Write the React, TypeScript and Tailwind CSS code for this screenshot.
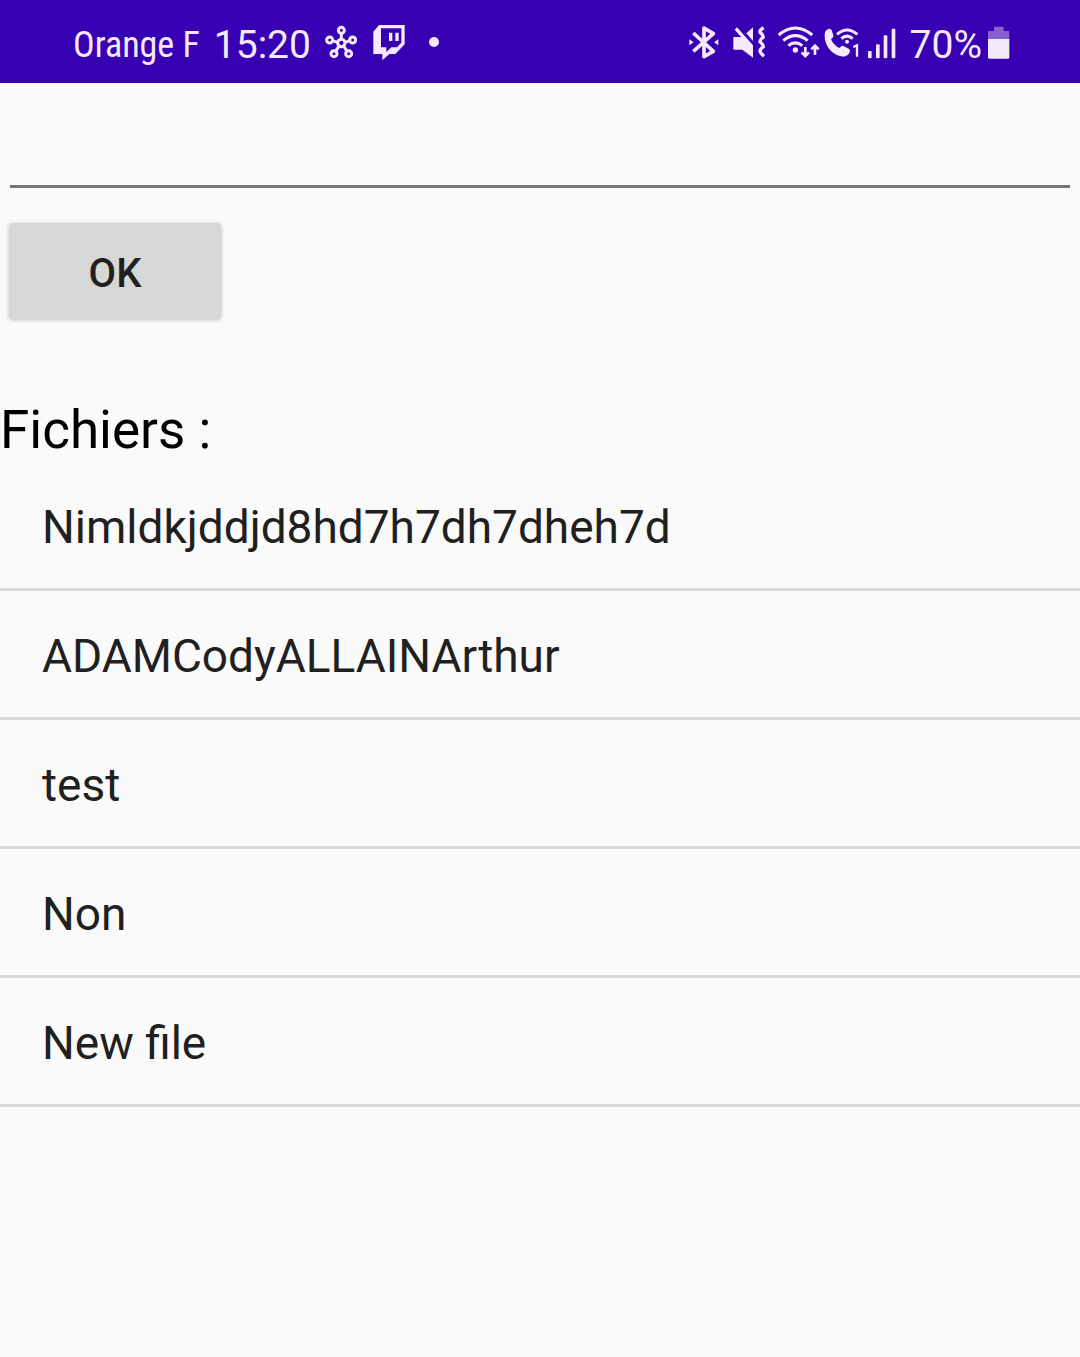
import { useState } from "react";

const initialFiles = ["Nimldkjddjd8hd7h7dh7dheh7d", "ADAMCodyALLAINArthur", "test", "Non", "New file"];

function HubIcon() {
  return (
    <svg className="h-9 w-8 shrink-0" viewBox="30 27 96 108" fill="none" stroke="currentColor" strokeWidth="9" aria-hidden="true">
      <circle cx="79" cy="46" r="9" />
      <circle cx="44" cy="75" r="9" />
      <circle cx="113" cy="75" r="9" />
      <circle cx="57" cy="116" r="9" />
      <circle cx="101" cy="116" r="9" />
      <circle cx="79" cy="84" r="11" />
      <path d="M79 54V74M51 77L69 82M106 77L89 82M62 109L72 93M96 109L86 93" />
    </svg>
  );
}

function TwitchIcon() {
  return (
    <svg className="h-9 w-8 shrink-0" viewBox="172 27 96 108" fill="currentColor" fillRule="evenodd" aria-hidden="true">
      <path d="M173 50L190 30H267V88L239 117H221L200 136V117H173ZM196 40V97H212V111L227 97H244L257 83V40Z" />
      <path d="M220 53H230V78H220ZM239 53H249V78H239Z" />
    </svg>
  );
}

function BluetoothIcon() {
  return (
    <svg className="h-9 w-[30px] shrink-0" viewBox="29 27 90 108" fill="none" stroke="currentColor" strokeWidth="11" aria-hidden="true">
      <path d="M42 54L102 109L74 125V39L102 56L42 109" strokeLinejoin="round" />
      <path d="M30 73L43 82L30 91ZM117 73L104 82L117 91Z" fill="currentColor" stroke="none" />
    </svg>
  );
}

function MuteIcon() {
  return (
    <svg className="h-9 w-[33px] shrink-0" viewBox="161 27 99 108" fill="currentColor" aria-hidden="true">
      <path d="M164 66H185L166 44L173 37L221 91V128L189 104H164Q162 104 162 102V68Q162 66 164 66Z" />
      <path d="M221 37V78L201 55Z" />
      <path d="M253 38Q240 45 242 52Q252 60 252 66Q242 74 242 81Q252 88 252 95Q242 102 242 109Q245 116 254 124" fill="none" stroke="currentColor" strokeWidth="10" />
    </svg>
  );
}

function WifiIcon() {
  return (
    <svg className="h-9 w-[42px] shrink-0" viewBox="294 27 126 108" fill="none" stroke="currentColor" strokeWidth="9" aria-hidden="true">
      <path d="M296 60Q346 18 397 60M310 77Q346 47 383 77M325 92Q346 75 367 92" />
      <circle cx="346" cy="105" r="8" fill="currentColor" stroke="none" />
      <path d="M376 96V122M365 112L376 123L387 112M405 120V93M394 103L405 92L416 103" strokeWidth="8" />
    </svg>
  );
}

function WifiCallIcon() {
  return (
    <svg className="h-9 w-9 shrink-0" viewBox="27 27 108 108" fill="none" stroke="currentColor" strokeWidth="9" aria-hidden="true">
      <path d="M30 51Q34 42 43 41Q48 41 50 46L55 61Q56 66 51 70L48 73Q56 91 73 99L79 94Q82 91 87 94L101 101Q107 105 104 112Q99 123 86 125Q63 124 45 105Q25 82 30 51Z" fill="currentColor" stroke="none" />
      <path d="M66 58Q96 32 127 58M79 71Q96 56 113 71" />
      <circle cx="96" cy="80" r="6" fill="currentColor" stroke="none" />
      <path d="M115 96L126 91V125" strokeWidth="7" />
    </svg>
  );
}

function SignalIcon() {
  return (
    <svg className="h-9 w-7 shrink-0" viewBox="161 27 84 108" fill="currentColor" aria-hidden="true">
      <rect x="161" y="108" width="11" height="22" rx="3" />
      <rect x="185" y="88" width="11" height="42" rx="3" />
      <rect x="208" y="61" width="11" height="69" rx="3" />
      <rect x="232" y="41" width="11" height="89" rx="3" />
    </svg>
  );
}

function BatteryIcon() {
  return (
    <svg className="h-9 w-[22px] shrink-0" viewBox="263 27 66 108" fill="currentColor" aria-hidden="true">
      <path d="M281 35H310V48H324Q327 48 327 51V72H263V51Q263 48 266 48H281Z" fill="#8860d0" />
      <path d="M263 72H327V127Q327 131 323 131H267Q263 131 263 127Z" fill="#f0eafa" />
    </svg>
  );
}

function StatusBar() {
  return (
    <header className="flex h-[83px] items-center justify-between bg-[#3700b3] pr-[70px] pl-[73px] text-[#f6e8ff]">
      <div className="flex items-center">
        <span className="mt-1.5 mr-3.5 font-['Roboto_Condensed','Roboto',sans-serif] text-[36px] leading-10 whitespace-nowrap">Orange F</span>
        <span className="mt-1.5 mr-3.5 text-[39px] leading-10">15:20</span>
        <HubIcon />
        <span className="w-4" />
        <TwitchIcon />
        <span className="ml-6 size-[10px] rounded-full bg-current" />
      </div>
      <div className="flex items-center">
        <BluetoothIcon />
        <span className="w-3.5" />
        <MuteIcon />
        <span className="w-3" />
        <WifiIcon />
        <span className="w-1" />
        <WifiCallIcon />
        <span className="w-2" />
        <SignalIcon />
        <span className="mt-1.5 mr-1.5 ml-3.5 text-[39px] leading-10">70%</span>
        <BatteryIcon />
      </div>
    </header>
  );
}

export default function App() {
  const [files, setFiles] = useState(initialFiles);
  const [name, setName] = useState("");

  return (
    <div className="min-h-screen bg-[#fafafa] font-['Roboto',sans-serif] text-[#202020]">
      <StatusBar />
      <main>
        <form
          className="px-[9px]"
          onSubmit={(event) => {
            event.preventDefault();
            if (name.trim()) {
              setFiles([...files, name.trim()]);
              setName("");
            }
          }}
        >
          <input
            type="text"
            aria-label="Nom du fichier"
            value={name}
            onChange={(event) => setName(event.target.value)}
            className="mx-px block h-[105px] w-[calc(100%-2px)] border-b-3 border-[#777777] bg-transparent pt-6 text-[50px] outline-none"
          />
          <button type="submit" className="mt-[35px] block h-24 w-[212px] rounded-[4px] bg-[#d6d8d7] pt-1.5 text-[40px] font-medium shadow-[0_1px_4px_rgba(0,0,0,0.24)]">
            OK
          </button>
        </form>
        <h1 className="mt-20 text-[53px] leading-[63px] font-normal text-black">Fichiers :</h1>
        <ul>
          {files.map((file, index) => (
            <li key={index} className="flex h-[129px] items-center border-b-3 border-[#d9d9d9] px-[42px] pt-1 text-[46px]">
              {file}
            </li>
          ))}
        </ul>
      </main>
    </div>
  );
}
